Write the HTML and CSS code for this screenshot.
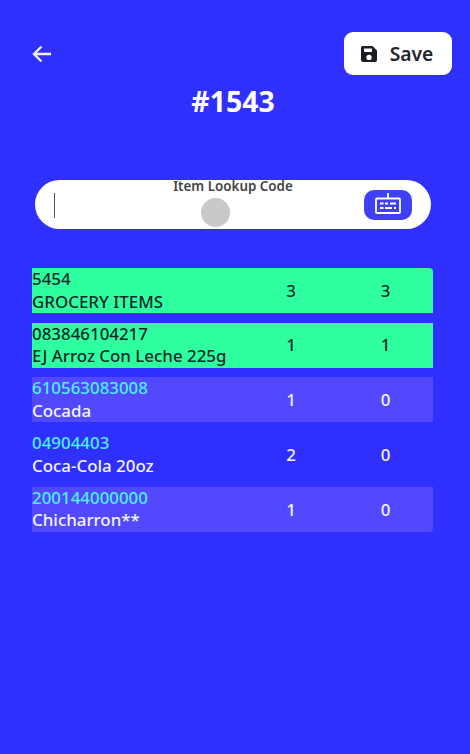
FILE: index.html
```html
<!DOCTYPE html>
<html lang="en">
<head>
<meta charset="utf-8">
<title>#1543</title>
<link rel="stylesheet" href="styles.css">
</head>
<body>
<main class="screen">
  <header class="topbar">
    <button class="back" aria-label="Back">
      <svg viewBox="0 0 24 24" width="24" height="24"><path d="M21 12H4M11.500 4.500 4 12l7.500 7.500" fill="none" stroke="#f4f2ff" stroke-width="2.300"/></svg>
    </button>
    <button class="save">
      <svg viewBox="0 0 18 18" width="18" height="18"><path fill-rule="evenodd" d="M2.500 1h10L17 5.500V15a2 2 0 0 1-2 2H3a2 2 0 0 1-2-2V2.500A1.500 1.500 0 0 1 2.500 1ZM4 3.500V7h8V3.500ZM9 9.700a2.700 2.700 0 1 0 0 5.400 2.700 2.700 0 0 0 0-5.400Z" fill="#1c1c24"/></svg>
      <span>Save</span>
    </button>
  </header>
  <h1 class="title">#1543</h1>
  <section class="lookup">
    <span class="caret"></span>
    <span class="label">Item Lookup Code</span>
    <span class="touch"></span>
    <button class="kbd" aria-label="Keyboard">
      <svg viewBox="0 0 28 24" width="28" height="24"><g fill="none" stroke="#fff" stroke-width="1.800"><rect x="2" y="5.500" width="24" height="14.500" rx="1"/><path d="M14 0v5"/></g><path d="M6 9.500h3.500v2H6zM11 9.500h3v2h-3zM16 9.500h6v2h-6zM6 14h3.500v2H6zM11 14h7v2h-7zM20 14h2v2h-2z" fill="#fff"/></svg>
    </button>
  </section>
  <section class="rows">
    <div class="row done first"><div class="info"><span class="code">5454</span><span>GROCERY ITEMS</span></div><span class="num">3</span><span class="num">3</span></div>
    <div class="row done"><div class="info"><span class="code">083846104217</span><span>EJ Arroz Con Leche 225g</span></div><span class="num">1</span><span class="num">1</span></div>
    <div class="row alt"><div class="info"><span class="code">610563083008</span><span>Cocada</span></div><span class="num">1</span><span class="num">0</span></div>
    <div class="row"><div class="info"><span class="code">04904403</span><span>Coca-Cola 20oz</span></div><span class="num">2</span><span class="num">0</span></div>
    <div class="row alt last"><div class="info"><span class="code">200144000000</span><span>Chicharron**</span></div><span class="num">1</span><span class="num">0</span></div>
  </section>
</main>
</body>
</html>
```
FILE: styles.css
```css
* { box-sizing: border-box; }
html, body { margin: 0; padding: 0; }
body {
  width: 470px;
  height: 754px;
  overflow: hidden;
  background: #3030fe;
  font-family: "Noto Sans", "Open Sans", sans-serif;
}
button { border: 0; padding: 0; font: inherit; cursor: pointer; }
.screen { display: flex; flex-direction: column; height: 754px; padding: 32px 18px 0 30px; }
.topbar { display: flex; justify-content: space-between; align-items: center; height: 43px; }
.back { background: none; width: 24px; height: 24px; display: flex; }
.save {
  width: 108px;
  height: 43px;
  background: #fff;
  border-radius: 9px;
  display: flex;
  align-items: center;
  justify-content: center;
  gap: 12px;
  padding-right: 3px;
  color: #24242c;
  font-size: 19.300px;
  font-weight: 600;
}
.title {
  margin: 7px 0 0 -16px;
  text-align: center;
  color: #fff;
  font-size: 28.400px;
  line-height: 38px;
  font-weight: 700;
}
.lookup {
  position: relative;
  margin: 60px 1px 0 5px;
  width: 396px;
  height: 49px;
  background: #fff;
  border-radius: 25px;
  display: flex;
  align-items: center;
  justify-content: space-between;
  padding: 0 19px;
}
.caret { width: 1px; height: 25px; margin-top: 1px; background: #555; }
.label {
  position: absolute;
  left: 0;
  right: 0;
  top: -3px;
  text-align: center;
  color: #444;
  font-size: 13.400px;
  line-height: 18px;
  font-weight: 600;
}
.touch {
  position: absolute;
  left: 166px;
  top: 18px;
  width: 29px;
  height: 29px;
  border-radius: 50%;
  background: #c9c9c9;
}
.kbd {
  width: 48px;
  height: 30px;
  border-radius: 10px;
  background: #3f3ff6;
  display: flex;
  align-items: center;
  justify-content: center;
}
.rows { margin: 39px 19px 0 2px; display: flex; flex-direction: column; }
.row {
  display: grid;
  grid-template-columns: 1fr 94px 95px;
  align-items: center;
  height: 45px;
  margin-bottom: 9.700px;
  color: #f4f4ff;
  font-size: 16.900px;
  font-weight: 500;
  line-height: 22.500px;
}
.row.alt { background: #5249ff; }
.row.done { background: #2eff9f; color: #0a2a2a; }
.row.first { border-radius: 0 4px 0 0; }
.row.last { border-radius: 0 0 4px 0; }
.info { display: flex; flex-direction: column; white-space: nowrap; }
.code { color: #4af0f2; }
.done .code { color: #0a2a2a; }
.num { text-align: center; padding-top: 1px; }
```
